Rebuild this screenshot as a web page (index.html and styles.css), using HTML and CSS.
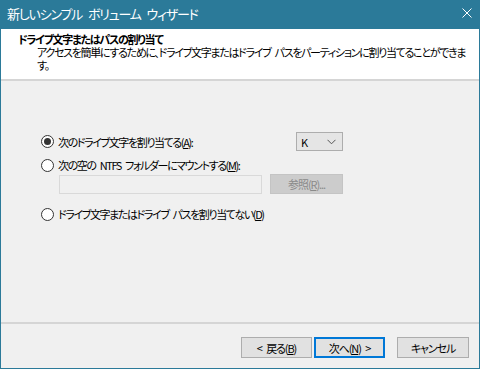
FILE: index.html
```html
<!DOCTYPE html>
<html lang="ja">
<head>
    <meta charset="UTF-8">
    <title>新しいシンプル ボリューム ウィザード</title>
    <link rel="stylesheet" href="styles.css">
</head>
<body>
    <div class="window">
        <div class="titlebar">
            <span class="title">新しいシンプル ボリューム ウィザード</span>
            <svg class="close" width="10" height="10" viewBox="0 0 10 10">
                <path d="M0.5 0.5 L9.5 9.5 M9.5 0.5 L0.5 9.5" stroke="#fff" stroke-width="1"/>
            </svg>
        </div>

        <header class="wizard-head">
            <h1>ドライブ文字またはパスの割り当て</h1>
            <p>アクセスを簡単にするために、ドライブ文字またはドライブ パスをパーティションに割り当てることができます。</p>
        </header>

        <main class="wizard-body">
            <div class="options">
                <div class="row">
                    <label class="radio checked"><span class="dot"></span>次のドライブ文字を割り当てる(<u>A</u>):</label>
                    <div class="select"><span>K</span>
                        <svg width="9" height="6" viewBox="0 0 9 6"><path d="M0.5 0.8 L4.5 4.8 L8.5 0.8" fill="none" stroke="#555" stroke-width="1"/></svg>
                    </div>
                </div>
                <div class="row row-mount">
                    <label class="radio"><span class="dot"></span>次の空の NTFS フォルダーにマウントする(<u>M</u>):</label>
                </div>
                <div class="row row-path">
                    <div class="textbox"></div>
                    <button class="btn disabled">参照(<u>R</u>)...</button>
                </div>
                <div class="row row-none">
                    <label class="radio"><span class="dot"></span>ドライブ文字またはドライブ パスを割り当てない(<u>D</u>)</label>
                </div>
            </div>
        </main>

        <footer class="wizard-foot">
            <button class="btn back">&lt; 戻る(<u>B</u>)</button>
            <button class="btn default">次へ(<u>N</u>) &gt;</button>
            <button class="btn cancel">キャンセル</button>
        </footer>
    </div>
</body>
</html>
```

FILE: styles.css
```css
body {
    margin: 0;
    font-family: "Noto Sans CJK JP", sans-serif;
    font-feature-settings: "palt";
    font-size: 11px;
    letter-spacing: -1.3px;
    word-spacing: 3px;
    color: #000;
}
.window {
    width: 480px;
    height: 369px;
    box-sizing: border-box;
    border: 1px solid #2b7a99;
    border-top: none;
    display: flex;
    flex-direction: column;
    background-color: #f0f0f0;
}
.titlebar {
    height: 27px;
    background-color: #2b7a99;
    color: #fff;
    display: flex;
    align-items: center;
    justify-content: space-between;
    padding: 0 8px 2px 7px;
    margin: 0 -1px;
}
.titlebar .title {
    font-size: 13px;
    letter-spacing: -1.2px;
    word-spacing: 4px;
}
.titlebar .close {
    margin-bottom: 1px;
}
.wizard-head {
    background-color: #fff;
    height: 52px;
    box-sizing: border-box;
    padding: 3px 0 0 17px;
    border-bottom: 2px solid #d5d5d5;
}
.wizard-head h1 {
    margin: 0;
    font-size: 11px;
    font-weight: bold;
    line-height: 14px;
}
.wizard-head p {
    margin: 0;
    padding-left: 19px;
    width: 435px;
    line-height: 13px;
}
.wizard-body {
    flex: 1;
    border-bottom: 2px solid #d5d5d5;
}
.options {
    width: 302px;
    margin: 51px 0 0 40px;
}
.row {
    display: flex;
    align-items: center;
    justify-content: space-between;
}
.row-mount {
    margin-top: 6px;
}
.row-path {
    margin: 1px 0 0 18px;
}
.row-none {
    margin-top: 12px;
}
.radio {
    display: flex;
    align-items: center;
    line-height: 16px;
    white-space: nowrap;
    letter-spacing: -1.4px;
}
.radio .dot {
    width: 11px;
    height: 11px;
    border: 1px solid #333;
    border-radius: 50%;
    margin-right: 4px;
    position: relative;
    background-color: #fff;
}
.radio.checked .dot::after {
    content: "";
    position: absolute;
    left: 2px;
    top: 2px;
    width: 7px;
    height: 7px;
    border-radius: 50%;
    background-color: #333;
}
.select {
    width: 47px;
    height: 19px;
    box-sizing: border-box;
    border: 1px solid #adadad;
    background-color: #e5e5e5;
    display: flex;
    align-items: center;
    justify-content: space-between;
    padding: 0 6px 0 4px;
    letter-spacing: 0;
}
.textbox {
    width: 203px;
    height: 19px;
    box-sizing: border-box;
    border: 1px solid #d9d9d9;
    background-color: #f0f0f0;
}
.btn {
    font-family: inherit;
    font-feature-settings: "palt";
    font-size: 11px;
    letter-spacing: -1.1px;
    word-spacing: 3px;
    height: 20px;
    padding: 0;
    border: 1px solid #adadad;
    background-color: #e1e1e1;
    color: #000;
}
.btn.disabled {
    width: 73px;
    background-color: #cccccc;
    border-color: #c4c4c4;
    color: #8a8a8a;
}
.wizard-foot {
    height: 44px;
    box-sizing: border-box;
    display: flex;
    justify-content: flex-end;
    padding: 13px 10px 0 0;
}
.wizard-foot .btn {
    width: 71px;
    height: 21px;
}
.btn.default {
    margin-left: 2px;
    border: 2px solid #0078d7;
}
.btn.cancel {
    margin-left: 12px;
    width: 72px;
}
```
